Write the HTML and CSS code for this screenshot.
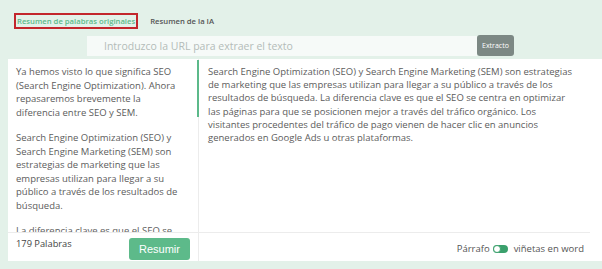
FILE: index.html
```html
<!DOCTYPE html>
<html lang="es">
<head>
  <meta charset="UTF-8">
  <meta name="viewport" content="width=device-width, initial-scale=1.0">
  <title>Resumidor de texto</title>
  <link rel="stylesheet" href="styles.css">
</head>
<body>
  <div class="tabs">
    <button class="tab active">Resumen de palabras originales</button>
    <button class="tab">Resumen de la IA</button>
  </div>

  <div class="url-row">
    <input type="text" placeholder="Introduzco la URL para extraer el texto">
    <button class="extract">Extracto</button>
  </div>

  <div class="panel">
    <div class="col col-left">
      <div class="text-box">
        <p>Ya hemos visto lo que significa SEO<br>(Search Engine Optimization). Ahora<br>repasaremos brevemente la<br>diferencia entre SEO y SEM.</p>
        <p>Search Engine Optimization (SEO) y<br>Search Engine Marketing (SEM) son<br>estrategias de marketing que las<br>empresas utilizan para llegar a su<br>público a través de los resultados de<br>búsqueda.</p>
        <p>La diferencia clave es que el SEO se</p>
      </div>
      <div class="footer">
        <span class="count">179 Palabras</span>
        <button class="summarize">Resumir</button>
      </div>
    </div>
    <div class="col col-right">
      <div class="text-box">
        <p>Search Engine Optimization (SEO) y Search Engine Marketing (SEM) son estrategias<br>de marketing que las empresas utilizan para llegar a su público a través de los<br>resultados de búsqueda. La diferencia clave es que el SEO se centra en optimizar<br>las páginas para que se posicionen mejor a través del tráfico orgánico. Los<br>visitantes procedentes del tráfico de pago vienen de hacer clic en anuncios<br>generados en Google Ads u otras plataformas.</p>
      </div>
      <div class="footer footer-right">
        <span>Párrafo</span>
        <span class="switch"></span>
        <span>viñetas en word</span>
      </div>
    </div>
  </div>
</body>
</html>
```

FILE: styles.css
```css
body {
  margin: 0;
  background: #e3f1e9;
  font-family: "Open Sans", sans-serif;
  color: #5c5c5c;
}
button {
  font-family: inherit;
  cursor: pointer;
}
.tabs {
  display: flex;
  align-items: center;
  gap: 9px;
  padding: 13px 0 0 14px;
}
.tab {
  background: none;
  border: 2px solid transparent;
  padding: 1px 1px;
  font-size: 7.7px;
  font-weight: 600;
  color: #555;
}
.tab.active {
  border-color: #c3262c;
  color: #5cb98a;
}
.url-row {
  display: flex;
  align-items: flex-start;
  margin: 6px 0 0 87px;
  width: 427px;
}
.url-row input {
  flex: 1;
  height: 20px;
  box-sizing: border-box;
  margin-top: 1px;
  border: none;
  background: #f6faf8;
  padding: 0 17px;
  font-family: inherit;
  font-size: 10.5px;
  outline: none;
}
.url-row input::placeholder {
  color: #b4bcb8;
}
.extract {
  height: 21px;
  width: 37px;
  border: none;
  border-radius: 3px;
  background: #7c8884;
  color: #fff;
  font-size: 7px;
  padding: 0;
}
.panel {
  display: grid;
  grid-template-columns: 191px 391px;
  margin: 3px 0 0 8px;
  background: #fff;
  height: 202px;
}
.col {
  display: flex;
  flex-direction: column;
  min-height: 0;
}
.col-left {
  border-right: 1px solid #ececec;
  position: relative;
}
.col-left::after {
  content: "";
  position: absolute;
  top: 1px;
  right: -1px;
  width: 2px;
  height: 57px;
  background: #5cb98a;
}
.text-box {
  height: 173px;
  overflow: hidden;
  box-sizing: border-box;
  padding: 6px 4px 0 8px;
  font-size: 9.5px;
  line-height: 13.5px;
  white-space: nowrap;
}
.col-right .text-box {
  padding: 6px 4px 0 9px;
  line-height: 13.2px;
}
.text-box p {
  margin: 0 0 12px;
}
.footer {
  flex: 1;
  border-top: 1px solid #ececec;
  display: flex;
  justify-content: space-between;
  align-items: flex-start;
  padding: 4px 8px 0 8px;
  font-size: 9.3px;
  line-height: 13.5px;
}
.count {
  color: #444;
}
.summarize {
  margin-top: 1px;
  width: 61px;
  height: 22px;
  border: none;
  border-radius: 3px;
  background: #5dba8a;
  color: #fff;
  font-family: "Liberation Sans", Arial, sans-serif;
  font-size: 11px;
  padding: 0;
}
.footer-right {
  justify-content: flex-end;
  align-items: center;
  padding: 4px 6px 0 0;
  gap: 3px;
  font-size: 9.5px;
  color: #555;
}
.footer-right span:last-child {
  margin-left: 3px;
}
.switch {
  width: 15px;
  height: 8px;
  border-radius: 4px;
  background: #3aa06c;
  position: relative;
}
.switch::before {
  content: "";
  position: absolute;
  left: 0;
  top: 0;
  width: 8px;
  height: 8px;
  box-sizing: border-box;
  border-radius: 50%;
  border: 1px solid #3aa06c;
  background: #fff;
}
```
